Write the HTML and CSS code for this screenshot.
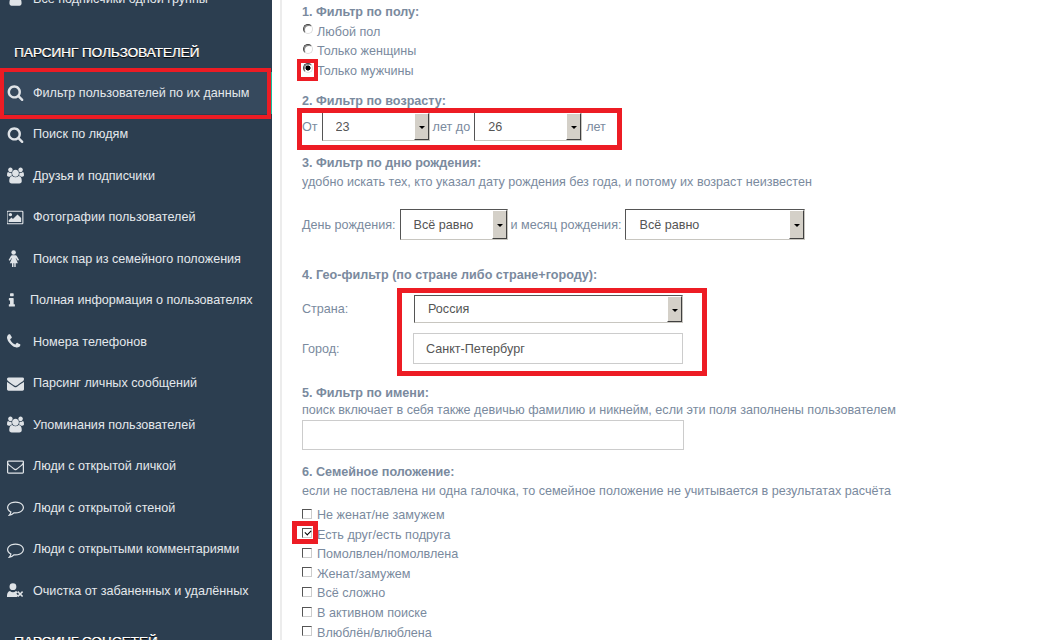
FILE: index.html
```html
<!DOCTYPE html>
<html lang="ru">
<head>
<meta charset="utf-8">
<title>Парсинг пользователей</title>
<link rel="stylesheet" href="styles.css">
</head>
<body>
<div class="page">
  <nav class="sidebar">
    <a class="item first"><svg class="ic" viewBox="0 0 1792 1792"><path d="M1536 1399q0 109-62.500 187t-150.500 78h-854q-88 0-150.500-78t-62.500-187q0-85 8.500-160.500t31.500-152 58.500-131 94-89 134.500-34.500q131 128 313 128t313-128q76 0 134.500 34.500t94 89 58.500 131 31.500 152 8.500 160.500zm-256-887q0 159-112.500 271.500t-271.500 112.500-271.500-112.500-112.500-271.500 112.500-271.500 271.500-112.500 271.500 112.500 112.500 271.500z"/></svg><span>Все подписчики одной группы</span></a>
    <h3 class="group">ПАРСИНГ ПОЛЬЗОВАТЕЛЕЙ</h3>
    <a class="item active"><svg class="ic"><use href="#i-search"/></svg><span>Фильтр пользователей по их данным</span></a>
    <a class="item"><svg class="ic"><use href="#i-search"/></svg><span>Поиск по людям</span></a>
    <a class="item"><svg class="ic"><use href="#i-users"/></svg><span>Друзья и подписчики</span></a>
    <a class="item"><svg class="ic" viewBox="0 0 1920 1792"><path d="M576 576q0 80-56 136t-136 56-136-56-56-136 56-136 136-56 136 56 56 136zm1024 384v448h-1408v-192l320-320 160 160 512-512zm96-704h-1600q-13 0-22.500 9.500t-9.500 22.500v1216q0 13 9.500 22.500t22.500 9.500h1600q13 0 22.500-9.500t9.500-22.500v-1216q0-13-9.500-22.500t-22.500-9.500zm160 32v1216q0 66-47 113t-113 47h-1600q-66 0-113-47t-47-113v-1216q0-66 47-113t113-47h1600q66 0 113 47t47 113z"/></svg><span>Фотографии пользователей</span></a>
    <a class="item"><svg class="ic" viewBox="0 0 18 18"><circle cx="7" cy="2.6" r="2.4"/><path d="M5 5.600h4q1 0 1.500 1l2.300 4-1.300.8-2-3-.3 0 2.300 5.600h-2.300v4h-1.500v-4h-.9v4h-1.500v-4h-2.300l2.300-5.600-.3 0-2 3-1.300-.8 2.300-4q.5-1 1.500-1z"/></svg><span>Поиск пар из семейного положения</span></a>
    <a class="item info"><svg class="ic" viewBox="0 0 1792 1792"><path d="M832 1344v128q0 26-19 45t-45 19h-512q-26 0-45-19t-19-45v-128q0-26 19-45t45-19h64v-384h-64q-26 0-45-19t-19-45v-128q0-26 19-45t45-19h384q26 0 45 19t19 45v576h64q26 0 45 19t19 45zm-128-1152v192q0 26-19 45t-45 19h-256q-26 0-45-19t-19-45v-192q0-26 19-45t45-19h256q26 0 45 19t19 45z"/></svg><span>Полная информация о пользователях</span></a>
    <a class="item"><svg class="ic" viewBox="0 0 1792 1792"><path d="M1408 1240q0 27-10 70.500t-21 68.500q-21 50-122 106-94 51-186 51-27 0-53-3.500t-57.500-12.500-47-14.500-55.500-20.500-49-18q-98-35-175-83-127-79-264-216t-216-264q-48-77-83-175-3-9-18-49t-20.500-55.500-14.500-47-12.500-57.500-3.500-53q0-92 51-186 56-101 106-122 25-11 68.500-21t70.500-10q14 0 21 3 18 6 53 76 11 19 30 54t35 63.500 31 53.500q3 4 17.500 25t21.500 35.500 7 28.500q0 20-28.500 50t-62 55-62 53-28.500 46q0 9 5 22.500t8.500 20.500 14 24 11.500 19q76 137 174 235t235 174q2 1 19 11.500t24 14 20.500 8.500 22.500 5q18 0 46-28.500t53-62 55-62 50-28.500q14 0 28.500 7t35.500 21.500 25 17.500q25 15 53.500 31t63.500 35 54 30q70 35 76 53 3 7 3 21z"/></svg><span>Номера телефонов</span></a>
    <a class="item"><svg class="ic" viewBox="0 0 1792 1792"><path d="M1792 710v794q0 66-47 113t-113 47h-1472q-66 0-113-47t-47-113v-794q44 49 101 87 362 246 497 345 57 42 92.500 65.500t94.500 48 110 24.500h2q51 0 110-24.500t94.500-48 92.500-65.500q170-123 498-345 57-39 100-87zm0-294q0 79-49 151t-122 123q-376 261-468 325-10 7-42.500 30.500t-54 38-52 32.500-57.500 27-50 9h-2q-23 0-50-9t-57.500-27-52-32.500-54-38-42.500-30.500q-91-64-262-182.500t-205-142.500q-62-42-117-115.500t-55-136.500q0-78 41.500-130t118.500-52h1472q65 0 112.500 47t47.500 113z"/></svg><span>Парсинг личных сообщений</span></a>
    <a class="item"><svg class="ic"><use href="#i-users"/></svg><span>Упоминания пользователей</span></a>
    <a class="item"><svg class="ic" viewBox="0 0 1792 1792"><path d="M1664 1504v-768q-32 36-69 66-268 206-426 338-51 43-83 67t-86.500 48.500-102.500 24.500h-2q-48 0-102.500-24.500t-86.500-48.500-83-67q-158-132-426-338-37-30-69-66v768q0 13 9.500 22.500t22.500 9.500h1472q13 0 22.500-9.500t9.500-22.500zm0-1051v-24.500l-.5-13-3-12.500-5.500-9-9-7.500-14-2.500h-1472q-13 0-22.500 9.500t-9.500 22.500q0 168 147 284 193 152 401 317 6 5 35 29.500t46 37.500 44.500 31.500 50.500 27.500 43 9h2q20 0 43-9t50.500-27.500 44.500-31.500 46-37.500 35-29.500q208-165 401-317 54-43 100.500-115.500t46.500-131.500zm128-37v1088q0 66-47 113t-113 47h-1472q-66 0-113-47t-47-113v-1088q0-66 47-113t113-47h1472q66 0 113 47t47 113z"/></svg><span>Люди с открытой личкой</span></a>
    <a class="item"><svg class="ic"><use href="#i-comment"/></svg><span>Люди с открытой стеной</span></a>
    <a class="item"><svg class="ic"><use href="#i-comment"/></svg><span>Люди с открытыми комментариями</span></a>
    <a class="item"><svg class="ic" viewBox="0 0 20 17"><circle cx="7" cy="4" r="4"/><path d="M0 16q-.3-6 3.500-7 1.500 1.500 3.500 1.500t3.500-1.500q1.500.5 2.200 1.500l-1.700 1.700 2.300 2.300-1.800 1.500z"/><path d="M12 10.500l1.300-1.300 2.200 2.200 2.200-2.200 1.300 1.300-2.200 2.200 2.200 2.200-1.300 1.300-2.200-2.200-2.200 2.200-1.300-1.300 2.200-2.200z"/></svg><span>Очистка от забаненных и удалённых</span></a>
    <h3 class="group last">ПАРСИНГ СОЦСЕТЕЙ</h3>
  </nav>

  <main class="content">
    <div class="h h1">1. Фильтр по полу:</div>
    <label class="opt"><input type="radio" name="sex" class="radio"><span>Любой пол</span></label>
    <label class="opt"><input type="radio" name="sex" class="radio"><span>Только женщины</span></label>
    <label class="opt"><input type="radio" name="sex" class="radio" checked><span>Только мужчины</span></label>

    <div class="h h2">2. Фильтр по возрасту:</div>
    <div class="row r-age">
      <span>От</span>
      <div class="sel w-age"><select><option>23</option></select><span class="btn"></span></div>
      <span>лет до</span>
      <div class="sel w-age"><select><option>26</option></select><span class="btn"></span></div>
      <span>лет</span>
    </div>

    <div class="h h3">3. Фильтр по дню рождения:</div>
    <div class="sub">удобно искать тех, кто указал дату рождения без года, и потому их возраст неизвестен</div>
    <div class="row r-day">
      <span>День рождения:</span>
      <div class="sel w-day"><select><option>Всё равно</option></select><span class="btn"></span></div>
      <span>и месяц рождения:</span>
      <div class="sel w-month"><select><option>Всё равно</option></select><span class="btn"></span></div>
    </div>

    <div class="h h4">4. Гео-фильтр (по стране либо стране+городу):</div>
    <div class="geo">
      <span class="geo-l">Страна:</span>
      <div class="sel w-geo"><select><option>Россия</option></select><span class="btn"></span></div>
      <span class="geo-l">Город:</span>
      <input class="text w-city" type="text" value="Санкт-Петербург">
    </div>

    <div class="h h5">5. Фильтр по имени:</div>
    <div class="sub s5">поиск включает в себя также девичью фамилию и никнейм, если эти поля заполнены пользователем</div>
    <input class="text w-name" type="text">

    <div class="h h6">6. Семейное положение:</div>
    <div class="sub">если не поставлена ни одна галочка, то семейное положение не учитывается в результатах расчёта</div>
    <div class="checks">
      <label class="opt"><input type="checkbox" class="check"><span>Не женат/не замужем</span></label>
      <label class="opt"><input type="checkbox" class="check" checked><span>Есть друг/есть подруга</span></label>
      <label class="opt"><input type="checkbox" class="check"><span>Помолвлен/помолвлена</span></label>
      <label class="opt"><input type="checkbox" class="check"><span>Женат/замужем</span></label>
      <label class="opt"><input type="checkbox" class="check"><span>Всё сложно</span></label>
      <label class="opt"><input type="checkbox" class="check"><span>В активном поиске</span></label>
      <label class="opt"><input type="checkbox" class="check"><span>Влюблён/влюблена</span></label>
    </div>
  </main>

  <div class="mark m-menu"></div>
  <div class="mark m-radio"></div>
  <div class="mark m-age"></div>
  <div class="mark m-geo"></div>
  <div class="mark m-check"></div>
</div>

<svg class="defs" width="0" height="0">
  <symbol id="i-search" viewBox="0 0 1792 1792"><path d="M1216 832q0-185-131.500-316.500t-316.500-131.500-316.500 131.500-131.500 316.500 131.500 316.500 316.500 131.500 316.500-131.500 131.500-316.500zm512 832q0 52-38 90t-90 38q-54 0-90-38l-343-342q-179 124-399 124-143 0-273.500-55.500t-225-150-150-225-55.500-273.500 55.500-273.500 150-225 225-150 273.500-55.500 273.500 55.500 225 150 150 225 55.500 273.500q0 220-124 399l343 343q37 37 37 90z"/></symbol>
  <symbol id="i-users" viewBox="0 0 1920 1792"><path d="M593 896q-162 5-265 128h-134q-82 0-138-40.500t-56-118.500q0-353 124-353 6 0 43.500 21t97.500 42.500 119 21.500q67 0 133-23-5 37-5 66 0 139 81 256zm1071 637q0 120-73 189.500t-194 69.500h-874q-121 0-194-69.500t-73-189.500q0-53 3.500-103.500t14-109 26.500-108.500 43-97.500 62-81 85.500-53.500 111.500-20q10 0 43 21.500t73 48 107 48 135 21.500 135-21.500 107-48 73-48 43-21.500q61 0 111.500 20t85.500 53.500 62 81 43 97.500 26.500 108.500 14 109 3.500 103.500zm-1024-1277q0 106-75 181t-181 75-181-75-75-181 75-181 181-75 181 75 75 181zm704 384q0 159-112.500 271.500t-271.500 112.500-271.500-112.500-112.500-271.500 112.500-271.500 271.500-112.500 271.500 112.500 112.500 271.500zm576 225q0 78-56 118.500t-138 40.500h-134q-103-123-265-128 81-117 81-256 0-29-5-66 66 23 133 23 59 0 119-21.500t97.500-42.500 43.500-21q124 0 124 353zm-128-609q0 106-75 181t-181 75-181-75-75-181 75-181 181-75 181 75 75 181z"/></symbol>
  <symbol id="i-comment" viewBox="0 0 1792 1792"><path d="M896 384q-204 0-381.500 69.500t-282 187.500-104.500 255q0 112 71.500 213.500t201.500 175.500l87 50-27 96q-24 91-70 172 152-63 275-171l43-38 57 6q69 8 130 8 204 0 381.500-69.500t282-187.500 104.500-255-104.500-255-282-187.500-381.500-69.500zm896 512q0 174-120 321.500t-326 233-450 85.500q-70 0-145-8-198 175-460 242-49 14-114 22h-5q-15 0-27-10.500t-16-27.500v-1q-3-4-.5-12t2-10 4.500-9.500l6-9 7-8.500 8-9q7-8 31-34.500t34.500-38 31-39.500 32.500-51 27-59 26-76q-157-89-247.500-220t-90.500-281q0-174 120-321.500t326-233 450-85.500 450 85.500 326 233 120 321.500z"/></symbol>
</svg>
</body>
</html>
```

FILE: styles.css
```css
* { box-sizing: border-box; }
html, body { margin: 0; height: 640px; overflow: hidden; background: #fff; }
body { font-family: "Liberation Sans", Arial, sans-serif; font-size: 12.6px; color: #7a8a9e; }
.defs { position: absolute; }

.page { position: relative; display: flex; width: 1052px; height: 640px; overflow: hidden; }

/* sidebar */
.sidebar { flex: 0 0 272px; height: 640px; background: #2c3e50; color: #e4e8ec; overflow: hidden; font-size: 12.6px; }
.item { display: flex; align-items: center; height: 41.5px; padding-left: 7px; }
.item.first { margin-top: -22px; }
.item.active { background: #36495d; border-right: 1px solid #1abc9c; }
.item span { margin-left: 9px; }
.ic { flex: 0 0 17px; width: 17px; height: 17px; fill: #dfe3e7; }
.item.info span { margin-left: 6px; }
.group { margin: 23px 0 10.5px 14px; height: 19px; line-height: 19px; font-size: 13.5px; font-weight: normal; color: #fff; text-shadow: 0 1px 1px #000, .5px 0 0 #fff; }
.group.last { margin-top: 20.5px; }

/* content */
.content { flex: 1; margin-left: 8px; padding-left: 20px; border-left: 2px solid #ececec; height: 640px; overflow: hidden; }
.h { height: 19px; line-height: 19px; font-weight: bold; font-size: 12.6px; }
.h1 { margin-top: 3px; }
.h2 { margin-top: 11px; }
.h3 { margin-top: 13px; }
.h4 { margin-top: 26px; }
.h5 { margin-top: 20px; }
.h6 { margin-top: 13px; }
.sub { height: 18px; line-height: 18px; white-space: nowrap; }
.s5 { margin-top: -2px; }

.opt { display: flex; align-items: center; height: 19.6px; }
.radio, .check { appearance: none; flex: none; margin: 0; position: relative; }
.radio { width: 10px; height: 10px; margin: -5px 4px 0 1px; border-radius: 50%; border: 1px solid; border-color: #444 #ddd #ddd #444; background: #fff; box-shadow: inset 1px 1px 0 #888; }
.radio:checked { background: radial-gradient(circle, #000 0, #000 2.3px, #fff 2.8px); }
.check { width: 10px; height: 10px; margin: -3px 5px 0 0; border: 1px solid; border-color: #555 #ccc #ccc #555; background: #fff; }
.check:checked::before { content: ""; position: absolute; left: 1.5px; top: 1px; width: 5px; height: 3px; border: solid #000; border-width: 0 0 1.5px 1.5px; transform: rotate(-45deg); }

.row { display: flex; align-items: center; }
.row > span { padding-top: 1px; }
.r-age { margin-top: 1px; }
.r-age > span:nth-child(1) { margin-right: 4px; }
.r-age > span:nth-child(3) { margin: 0 4px 0 3px; }
.r-age > span:nth-child(5) { margin-left: 4px; }
.r-day { margin-top: 18px; }
.r-day > span:nth-child(1) { margin-right: 4px; }
.r-day > span:nth-child(3) { margin: 0 4px 0 3px; }

.sel { display: flex; border: 1px solid; border-color: #555 #c8c6c0 #c8c6c0 #555; background: #fff; }
.sel select { flex: 1; min-width: 0; height: 100%; appearance: none; border: 0; outline: 0; background: transparent; padding: 1px 0 0 13px; font: 12.6px "Liberation Sans", Arial, sans-serif; color: #555; }
.btn { position: relative; flex: 0 0 15px; background: #d4d0c8; border: 1px solid; border-color: #fff #404040 #404040 #fff; }
.btn::after { content: ""; position: absolute; left: 4px; top: 50%; border: 3px solid transparent; border-top: 3px solid #000; border-bottom: 0; }
.w-age { width: 108px; height: 29px; }
.w-day { width: 108px; height: 31px; }
.w-month { width: 180px; height: 31px; }

.geo { display: grid; grid-template-columns: 111px 270px; row-gap: 10px; align-items: center; margin-top: 10px; }
.geo-l { padding-top: 1px; }
.w-geo { width: 269px; height: 28px; margin-left: 1px; }
.text { display: block; border: 1px solid #ccc; background: #fff; font: 12.6px "Liberation Sans", Arial, sans-serif; color: #555; padding: 1px 12px 0; outline: 0; }
.w-city { width: 270px; height: 31px; }
.w-name { width: 382px; height: 30px; margin-top: 1px; }
.checks { margin-top: 5.5px; }

/* red annotations */
.mark { position: absolute; border: 4px solid #ed1c24; }
.m-menu { left: 0; top: 68px; width: 271px; height: 51px; }
.m-radio { left: 297px; top: 59px; width: 21px; height: 22px; }
.m-age { left: 297px; top: 108px; width: 325px; height: 42px; border-width: 5px; }
.m-geo { left: 397px; top: 288px; width: 310px; height: 88px; border-width: 5px; }
.m-check { left: 292px; top: 521px; width: 26px; height: 23px; border-width: 5px; }
```
